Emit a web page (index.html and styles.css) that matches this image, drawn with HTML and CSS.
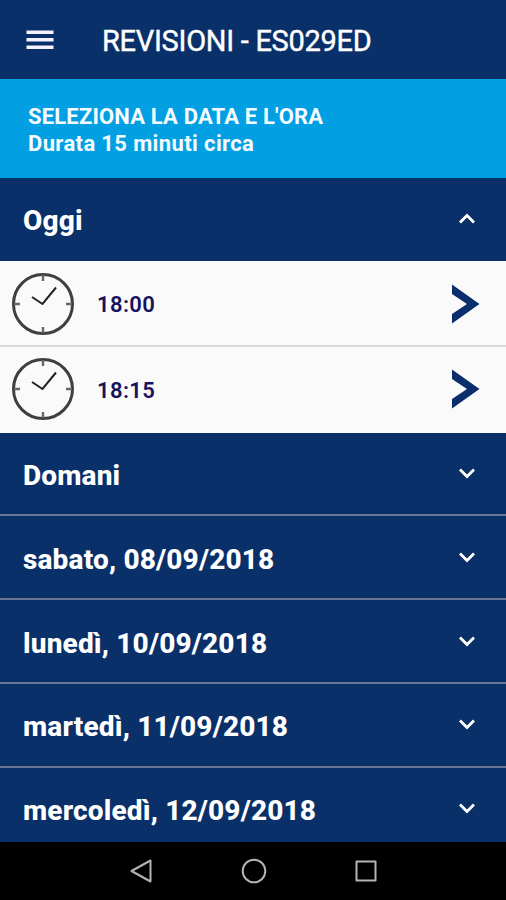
FILE: index.html
```html
<!DOCTYPE html>
<html lang="it">
<head>
    <meta charset="UTF-8">
    <title>Revisioni</title>
    <link rel="stylesheet" href="styles.css">
</head>
<body>
    <div id="container">
        <div class="header">
            <svg class="menu" width="28" height="20" viewBox="0 0 28 20">
                <path d="M0.5 2.2h27M0.5 9.7h27M0.5 17.2h27"/>
            </svg>
            <h1>REVISIONI - ES029ED</h1>
        </div>
        <div class="info">
            <p class="info-title">SELEZIONA LA DATA E L'ORA</p>
            <p class="info-time">Durata 15 minuti circa</p>
        </div>
        <ul class="days">
            <li class="day open">
                <span>Oggi</span>
                <svg class="arrow" width="18" height="12" viewBox="0 0 18 12"><path d="M2 9.5l7-7 7 7"/></svg>
            </li>
            <li>
                <ul class="hours">
                    <li class="hour">
                        <svg class="clock" width="64" height="64" viewBox="0 0 64 64">
                            <circle cx="32" cy="32" r="29.5"/>
                            <path class="tick" d="M32 3v6M32 55v6M3 32h6M55 32h6"/>
                            <path class="hand" d="M21 25l10.5 7L45 15.5"/>
                        </svg>
                        <span>18:00</span>
                        <svg class="go" width="28" height="40" viewBox="0 0 28 40"><path d="M0 0.5L27.5 20L0 39.5V30L15 20L0 10z"/></svg>
                    </li>
                    <li class="hour">
                        <svg class="clock" width="64" height="64" viewBox="0 0 64 64">
                            <circle cx="32" cy="32" r="29.5"/>
                            <path class="tick" d="M32 3v6M32 55v6M3 32h6M55 32h6"/>
                            <path class="hand" d="M21 25l10.5 7L45 15.5"/>
                        </svg>
                        <span>18:15</span>
                        <svg class="go" width="28" height="40" viewBox="0 0 28 40"><path d="M0 0.5L27.5 20L0 39.5V30L15 20L0 10z"/></svg>
                    </li>
                </ul>
            </li>
            <li class="day">
                <span>Domani</span>
                <svg class="arrow" width="18" height="12" viewBox="0 0 18 12"><path d="M2 2.5l7 7 7-7"/></svg>
            </li>
            <li class="day">
                <span>sabato, 08/09/2018</span>
                <svg class="arrow" width="18" height="12" viewBox="0 0 18 12"><path d="M2 2.5l7 7 7-7"/></svg>
            </li>
            <li class="day">
                <span>lunedì, 10/09/2018</span>
                <svg class="arrow" width="18" height="12" viewBox="0 0 18 12"><path d="M2 2.5l7 7 7-7"/></svg>
            </li>
            <li class="day">
                <span>martedì, 11/09/2018</span>
                <svg class="arrow" width="18" height="12" viewBox="0 0 18 12"><path d="M2 2.5l7 7 7-7"/></svg>
            </li>
            <li class="day">
                <span>mercoledì, 12/09/2018</span>
                <svg class="arrow" width="18" height="12" viewBox="0 0 18 12"><path d="M2 2.5l7 7 7-7"/></svg>
            </li>
        </ul>
        <div class="nav">
            <svg width="26" height="26" viewBox="0 0 26 26"><path d="M22.5 2.5v21L3.5 13z"/></svg>
            <svg width="26" height="26" viewBox="0 0 26 26"><circle cx="13" cy="13" r="11.3"/></svg>
            <svg width="26" height="26" viewBox="0 0 26 26"><path d="M3.5 3.5h19v19h-19z"/></svg>
        </div>
    </div>
</body>
</html>
```

FILE: styles.css
```css
*{
    margin: 0;
    padding: 0;
    box-sizing: border-box;
}
ul{
    list-style: none;
}
svg{
    display: block;
    flex: none;
}
body{
    font-family: Roboto, "Liberation Sans", sans-serif;
    background: #000;
}
#container{
    height: 900px;
    display: flex;
    flex-direction: column;
    overflow: hidden;
}
.header{
    flex: none;
    height: 79px;
    padding: 3px 0 0 26px;
    display: flex;
    align-items: center;
    gap: 48px;
    background: #0a3069;
    color: #fff;
}
.header h1{
    font-size: 29px;
    font-weight: 400;
    line-height: 34px;
    letter-spacing: -0.28px;
    white-space: nowrap;
    -webkit-text-stroke: 0.4px #fff;
}
.menu{
    fill: none;
    stroke: #f6f2ff;
    stroke-width: 3.4;
    margin-top: -3px;
}
.info{
    flex: none;
    height: 99px;
    padding: 24px 28px 0;
    background: #029fe3;
    color: #f4fcff;
    font-size: 22px;
    font-weight: 700;
    line-height: 27px;
}
.info-title{
    letter-spacing: 0.17px;
}
.info-time{
    letter-spacing: 0.37px;
}
.days{
    flex: 1;
    min-height: 0;
    overflow: hidden;
    background: #0a3069;
}
.day{
    height: 83.8px;
    padding: 0 30px 0 23px;
    display: flex;
    align-items: center;
    justify-content: space-between;
    border-bottom: 2px solid #6c7595;
    color: #fff;
    font-size: 28px;
    font-weight: 800;
    letter-spacing: 0.16px;
    white-space: nowrap;
}
.day span{
    padding-top: 4px;
}
.day.open{
    height: 83px;
    border-bottom: 0;
}
.day.open span{
    padding-top: 2px;
}
.arrow{
    margin-top: -1px;
    fill: none;
    stroke: #fff;
    stroke-width: 2.8;
}
.day.open .arrow{
    margin-top: -2px;
}
.hours{
    padding-bottom: 0.6px;
    background: #fafafa;
}
.hour{
    height: 86px;
    padding: 1px 26px 0 11px;
    display: flex;
    align-items: center;
    background: #fafafa;
    border-bottom: 2px solid #d9d9d9;
    color: #16125e;
    font-size: 22px;
    font-weight: 600;
    letter-spacing: 0.4px;
}
.hour:last-child{
    height: 85px;
    padding: 0 26px 1px 11px;
    border-bottom: 0;
}
.hour span{
    margin-left: 22px;
    padding-top: 2px;
}
.clock{
    fill: none;
    stroke: #3f3f3f;
    stroke-width: 3;
}
.clock .tick{
    stroke: #666;
    stroke-width: 2.4;
}
.clock .hand{
    stroke: #222;
    stroke-width: 2;
}
.go{
    margin-left: auto;
    fill: #0a2e6c;
}
.nav{
    flex: none;
    height: 58px;
    padding: 0 127px 0 128px;
    display: flex;
    align-items: center;
    justify-content: space-between;
    background: #000;
}
.nav svg{
    fill: none;
    stroke: #b4b4b4;
    stroke-width: 2;
    stroke-linejoin: round;
}
```
